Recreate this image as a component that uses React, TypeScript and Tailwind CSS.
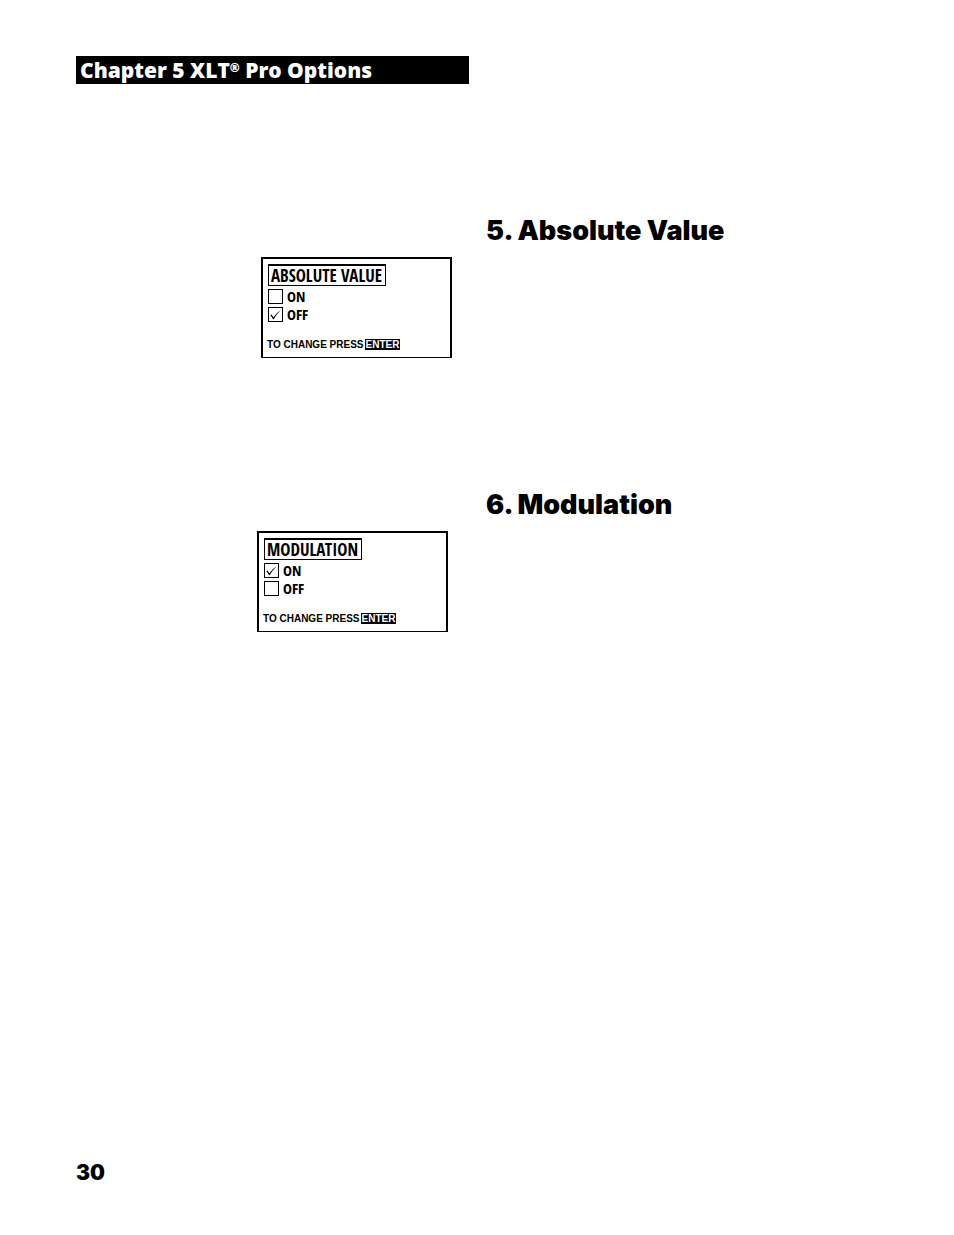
type PanelProps = {
  title: string;
  name: string;
  selected: "ON" | "OFF";
};

function Choice({ name, label, checked }: { name: string; label: string; checked: boolean }) {
  return (
    <label className="flex h-[18px] items-center gap-1 font-['Open_Sans_Condensed','Roboto_Condensed',sans-serif] text-[15px] leading-[18px] font-bold">
      <span className="grid h-[15px] w-[15px] place-items-center">
        <input
          type="radio"
          name={name}
          defaultChecked={checked}
          className="peer col-start-1 row-start-1 h-[15px] w-[15px] appearance-none border border-black bg-white"
        />
        <svg
          viewBox="0 0 15 15"
          className="pointer-events-none invisible col-start-1 row-start-1 h-[15px] w-[15px] peer-checked:visible"
          aria-hidden="true"
        >
          <path d="M2.3 8.3 3.4 7.6 5.4 10.2Q8.5 5.8 12.6 3.2Q8.6 7.2 5.7 12.2H5Q4 10 2.3 8.3Z" fill="black" />
        </svg>
      </span>
      {label}
    </label>
  );
}

function Panel({ title, name, selected }: PanelProps) {
  return (
    <fieldset className="h-[101px] w-[191px] border-2 border-b border-black pt-[5px] pl-1">
      <div className="ml-px flex h-[22px] w-fit items-center border border-t-2 border-black pr-[3px] pl-[2px] font-['Open_Sans_Condensed','Roboto_Condensed',sans-serif] text-[17px] leading-5 font-bold whitespace-nowrap">
        {title}
      </div>
      <div className="mt-px ml-px">
        <Choice name={name} label="ON" checked={selected === "ON"} />
        <Choice name={name} label="OFF" checked={selected === "OFF"} />
      </div>
      <p className="mt-4 flex items-center gap-px font-['Liberation_Sans',sans-serif] text-[10px] leading-[11px] font-bold whitespace-nowrap">
        TO CHANGE PRESS
        <button type="button" className="bg-black px-px text-white">
          ENTER
        </button>
      </p>
    </fieldset>
  );
}

export default function App() {
  return (
    <div className="flex min-h-screen flex-col bg-white px-[76px] pt-14 pb-12 text-black">
      <header className="h-7 w-[49%] bg-black pl-1 font-['Open_Sans',sans-serif] text-[21px] leading-7 font-black whitespace-nowrap text-white">
        Chapter 5 XLT<sup className="text-[12px] leading-none">®</sup> Pro Options
      </header>
      <main className="flex-1 pt-[129px]">
        <section className="h-[274px]">
          <h2 className="ml-[410px] font-['Inter',sans-serif] text-[27px] leading-9 font-black whitespace-nowrap">
            5. Absolute Value
          </h2>
          <div className="mt-2 ml-[185px]">
            <Panel title="ABSOLUTE VALUE" name="absolute" selected="OFF" />
          </div>
        </section>
        <section>
          <h2 className="ml-[410px] font-['Inter',sans-serif] text-[27px] leading-9 font-black whitespace-nowrap">
            6. Modulation
          </h2>
          <div className="mt-2 ml-[181px]">
            <Panel title="MODULATION" name="modulation" selected="ON" />
          </div>
        </section>
      </main>
      <footer className="font-['Inter',sans-serif] text-[21px] leading-7 font-black">30</footer>
    </div>
  );
}
